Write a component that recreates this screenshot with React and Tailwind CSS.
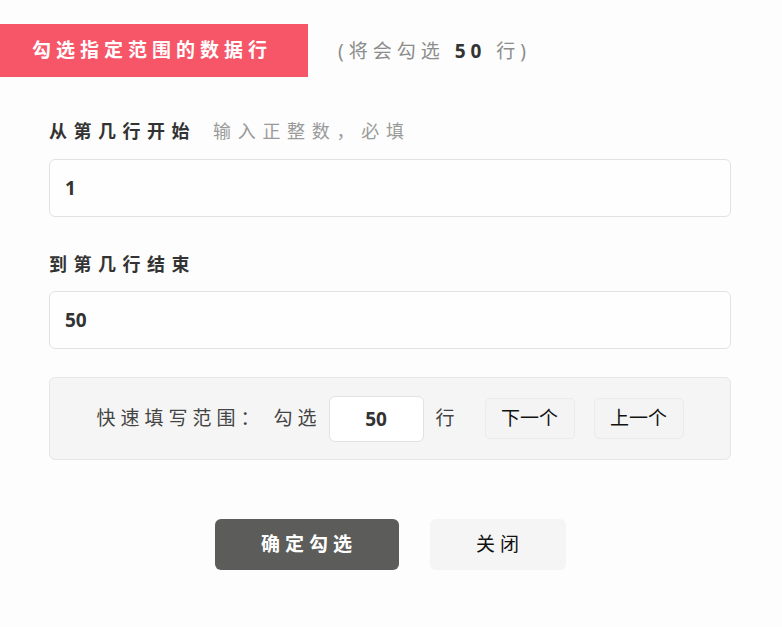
import { useState } from 'react'

const FONT = "font-['Noto_Sans','Noto_Sans_CJK_SC',sans-serif]"

export default function App() {
  const [start, setStart] = useState('1')
  const [end, setEnd] = useState('50')
  const [step, setStep] = useState('50')

  const count = Math.max(0, Number(end) - Number(start) + 1)

  return (
    <div className={`${FONT} min-h-[627px] w-[782px] bg-[#fcfdfc] text-[#333]`}>
      {/* 顶部标题条 */}
      <div className="flex items-center pt-[24px]">
        <div className="flex h-[53px] w-[308px] items-center bg-[#f65668] pl-[32px] text-[19px] font-bold tracking-[5px] text-white">
          勾选指定范围的数据行
        </div>
        <div className="ml-[30px] pt-[2px] text-[19px] tracking-[5px] text-[#8c8c8c]">
          (将会勾选 <span className="font-bold text-[#333]">{count}</span> 行)
        </div>
      </div>

      <div className="px-[49px] pr-[51px]">
        <div className="mt-[42px] flex h-[24px] items-center">
          <span className="text-[18px] font-bold tracking-[6.5px]">从第几行开始</span>
          <span className="ml-[17px] text-[18px] tracking-[6.7px] text-[#9a9a9a]">输入正整数，必填</span>
        </div>
        <input
          value={start}
          onChange={e => setStart(e.target.value)}
          className="mt-[16px] block h-[58px] w-full rounded-[6px] border border-[#e2e2e2] bg-[#fdfefd] px-[15px] text-[19px] font-bold text-[#333] outline-none"
        />

        <div className="mt-[35px] flex h-[24px] items-center">
          <span className="text-[18px] font-bold tracking-[6.5px]">到第几行结束</span>
        </div>
        <input
          value={end}
          onChange={e => setEnd(e.target.value)}
          className="mt-[15px] block h-[58px] w-full rounded-[6px] border border-[#e2e2e2] bg-[#fdfefd] px-[15px] text-[19px] font-bold text-[#333] outline-none"
        />

        {/* 快速填写 */}
        <div className="mt-[28px] flex h-[83px] items-center justify-center rounded-[6px] border border-[#e6e6e6] bg-[#f5f5f5]">
          <span className="text-[19px] tracking-[5px] text-[#444]">快速填写范围：</span>
          <span className="ml-[9px] text-[19px] tracking-[5px] text-[#444]">勾选</span>
          <input
            value={step}
            onChange={e => setStep(e.target.value)}
            className="ml-[7px] h-[46px] w-[95px] rounded-[6px] border border-[#e2e2e2] bg-white text-center text-[19px] font-bold text-[#333] outline-none"
          />
          <span className="ml-[12px] text-[19px] text-[#444]">行</span>
          <button className="ml-[30px] h-[41px] w-[90px] rounded-[5px] border border-[#ebebeb] bg-[#f4f4f4] text-[19px] text-[#111]">
            下一个
          </button>
          <button className="ml-[19px] h-[41px] w-[90px] rounded-[5px] border border-[#ebebeb] bg-[#f4f4f4] text-[19px] text-[#111]">
            上一个
          </button>
        </div>

        <div className="mt-[59px] flex justify-center gap-[31px]">
          <button className="h-[51px] w-[184px] rounded-[6px] bg-[#5c5d5a] pl-[5px] text-[19px] font-bold tracking-[5px] text-white">
            确定勾选
          </button>
          <button className="h-[51px] w-[136px] rounded-[6px] bg-[#f4f5f4] pl-[5px] text-[19px] tracking-[5px] text-[#111]">
            关闭
          </button>
        </div>
      </div>
    </div>
  )
}
